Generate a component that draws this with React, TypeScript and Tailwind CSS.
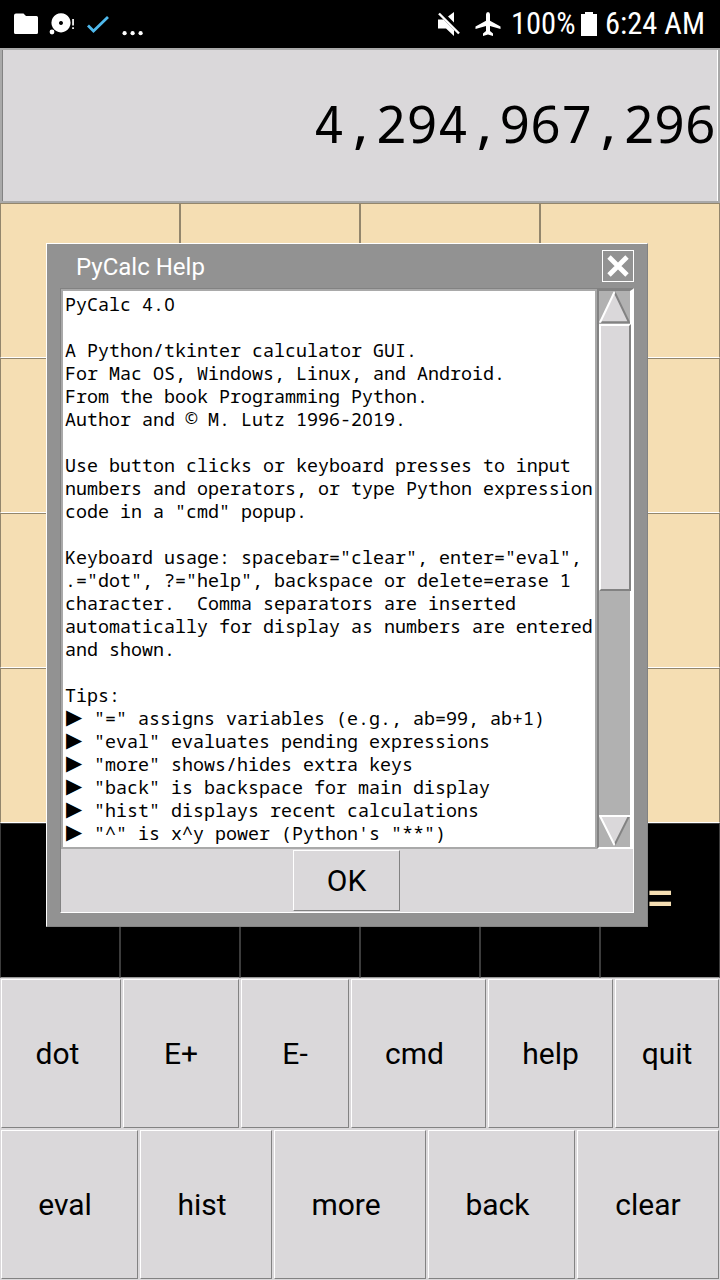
import React from "react";

const helpLines = [
  "PyCalc 4.0",
  "",
  "A Python/tkinter calculator GUI.",
  "For Mac OS, Windows, Linux, and Android.",
  "From the book Programming Python.",
  "Author and © M. Lutz 1996-2019.",
  "",
  "Use button clicks or keyboard presses to input",
  "numbers and operators, or type Python expression",
  'code in a "cmd" popup.',
  "",
  'Keyboard usage: spacebar="clear", enter="eval",',
  '.="dot", ?="help", backspace or delete=erase 1',
  "character.  Comma separators are inserted",
  "automatically for display as numbers are entered",
  "and shown.",
  "",
  "Tips:",
];

const tips = [
  '"=" assigns variables (e.g., ab=99, ab+1)',
  '"eval" evaluates pending expressions',
  '"more" shows/hides extra keys',
  '"back" is backspace for main display',
  '"hist" displays recent calculations',
  '"^" is x^y power (Python\'s "**")',
];

const actionsTop = [
  { label: "dot", size: "w-[120px] pr-[7px]" },
  { label: "E+", size: "w-[116px]" },
  { label: "E-", size: "w-[108px]" },
  { label: "cmd", size: "w-[135px] pr-2" },
  { label: "help", size: "w-[125px]" },
  { label: "quit", size: "w-[104px]" },
];

const actionsBottom = [
  { label: "eval", size: "w-[137px] pr-[9px]" },
  { label: "hist", size: "w-[132px] pr-2" },
  { label: "more", size: "w-[152px] pr-2" },
  { label: "back", size: "w-[147px] pr-2" },
  { label: "clear", size: "w-[142px]" },
];

function StatusBar() {
  return (
    <header className="flex h-12 items-center bg-black text-white">
      <svg className="h-12 w-[112px] shrink-0" viewBox="0 0 112 48" fill="#fff">
        <path d="M14 15.500q0-2 2-2h7.500l2.500 2.500h10.500q1.500 0 1.500 1.500v15q0 1.500-1.500 1.500h-21q-1.500 0-1.500-1.500z" />
        <path
          fillRule="evenodd"
          d="M61 13.200a9.600 9.600 0 1 0 .01 0zM61 21a2 2 0 1 1-.01 0z"
        />
        <circle cx="52" cy="32" r="2.400" />
        <path d="M72.200 19h1.700v6.500h-1.700zM72.200 27.200h1.700v1.800h-1.700z" />
        <path d="M88 25.500l5.500 5.500L108 17" fill="none" stroke="#4fb9ec" strokeWidth="2.800" />
      </svg>
      <svg className="ml-2 h-12 w-6 shrink-0" viewBox="120 0 24 48" fill="#fff">
        <circle cx="124.600" cy="33.200" r="2.100" />
        <circle cx="132.600" cy="33.200" r="2.100" />
        <circle cx="140.600" cy="33.200" r="2.100" />
      </svg>
      <div className="ml-auto flex h-12 items-center pt-px font-['Roboto_Condensed','Roboto',sans-serif] text-[30.500px] leading-none">
        <svg className="-mt-px h-12 w-[70px]" viewBox="434 0 70 48" fill="#fff">
          <path d="M438 19.500h5.500l10.500 10.500v6l-8-7.500h-8z" />
          <path d="M448 16.500l6-4.500v10.500z" />
          <path d="M439 13.500L459 33.500" stroke="#fff" strokeWidth="2.400" />
          <path d="M488 12q2 0 2 2.500v6.200l10.500 5.700v2.600L490 26v5l3 2.500V36l-5-1.500-5 1.500v-2.500l3-2.500v-5l-10.500 3v-2.600L486 20.700v-6.200q0-2.500 2-2.500z" />
        </svg>
        <span className="ml-[7px] w-[64px] whitespace-nowrap">100%</span>
        <svg className="-mt-px ml-[5px] h-12 w-[18px]" viewBox="580 0 18 48" fill="#fff">
          <path d="M585 12h8v2h4v22h-16V14h4z" />
        </svg>
        <span className="ml-[7px] w-[115px] whitespace-nowrap">6:24 AM</span>
      </div>
    </header>
  );
}

function ActionRow({ items }: { items: { label: string; size: string }[] }) {
  return (
    <div className="flex gap-[2px] px-px">
      {items.map((item) => (
        <button
          key={item.label}
          className={`flex h-[149px] shrink-0 items-center justify-center border border-t-white border-l-white border-r-[#828282] border-b-[#828282] ${item.size}`}
        >
          {item.label}
        </button>
      ))}
    </div>
  );
}

function Scrollbar() {
  return (
    <div className="flex w-[36px] flex-col border-t-2 border-r-[3px] border-b-2 border-l-2 border-t-[#828282] border-r-white border-b-white border-l-[#828282] bg-[#b1b1b1]">
      <svg className="h-[33px] w-[31px] shrink-0" viewBox="0 0 31 33">
        <path d="M15.500 0L31 32H0z" fill="#dad8da" />
        <path d="M15.500 1L30 31.200H1" fill="none" stroke="#828282" strokeWidth="2" />
        <path d="M1 31.500L15.500 1" fill="none" stroke="#fff" strokeWidth="2" />
      </svg>
      <div className="h-[267px] w-8 shrink-0 border-2 border-t-white border-r-[#828282] border-b-[#828282] border-l-white bg-[#dad8da]" />
      <svg className="mt-auto h-8 w-[31px] shrink-0" viewBox="0 0 31 32">
        <path d="M0 0H31L15.500 31z" fill="#dad8da" />
        <path d="M30 1L15.500 30" fill="none" stroke="#828282" strokeWidth="2" />
        <path d="M31 1H1L15.500 30" fill="none" stroke="#fff" strokeWidth="2" />
      </svg>
    </div>
  );
}

/* Zeros and the copyright sign are set in the proportional face, one cell wide each. */
function MonoLine({ text }: { text: string }) {
  return (
    <>
      {text.split(/([0©])/).map((part, i) => {
        if (part === "0") {
          return (
            <span key={i} className="inline-block h-[23px] w-[11px] text-center align-top font-['Noto_Sans',sans-serif]">
              0
            </span>
          );
        }
        if (part === "©") {
          return (
            <span key={i} className="inline-flex h-[23px] w-[11px] justify-center align-top font-['Noto_Sans',sans-serif] text-[16px]">
              ©
            </span>
          );
        }
        return <React.Fragment key={i}>{part}</React.Fragment>;
      })}
    </>
  );
}

function HelpDialog() {
  return (
    <section className="absolute top-[243px] left-[46px] flex h-[684px] w-[602px] flex-col border border-t-white border-r-[#828282] border-b-[#828282] border-l-white bg-[#929292] px-[13px] pb-[13px]">
      <div className="flex h-[44px] shrink-0 items-center justify-between pl-4">
        <h1 className="pt-[2px] font-['Roboto',sans-serif] text-2xl leading-none text-white">PyCalc Help</h1>
        <button className="flex size-8 items-center justify-center border border-white">
          <svg className="size-[22px]" viewBox="0 0 22 22" fill="none" stroke="#fff" strokeWidth="4.800">
            <path d="M2 2L20 20M20 2L2 20" />
          </svg>
        </button>
      </div>
      <div className="flex min-h-0 flex-1 flex-col border border-t-[#828282] border-r-white border-b-white border-l-[#828282] bg-[#dad8da]">
        <div className="flex h-[560px] shrink-0">
          <div className="w-[536px] shrink-0 overflow-hidden border-2 border-[#a9a9a9] bg-white pt-px pl-[2px] font-['Noto_Sans_Mono','DejaVu_Sans_Mono',monospace] text-[18.333px] leading-[23px] text-black">
            {helpLines.map((line, i) => (
              <div key={i} className="h-[23px] whitespace-pre">
                <MonoLine text={line} />
              </div>
            ))}
            {tips.map((tip) => (
              <div key={tip} className="flex h-[23px] whitespace-pre">
                <span className="w-[29px] pl-px font-['DejaVu_Sans'] text-[21px]">▶</span>
                <span>{tip}</span>
              </div>
            ))}
          </div>
          <Scrollbar />
        </div>
        <div className="flex flex-1 justify-center pt-px pr-[2px]">
          <button className="h-[61px] w-[107px] border border-t-white border-r-[#828282] border-b-[#828282] border-l-white pl-px font-['Roboto',sans-serif] text-[30px] text-black">
            OK
          </button>
        </div>
      </div>
    </section>
  );
}

export default function App() {
  return (
    <div className="relative flex h-[1280px] w-[720px] flex-col overflow-hidden bg-[#dad8da] font-['Roboto',sans-serif] text-black">
      <StatusBar />
      <div className="h-[155px] shrink-0 border-2 border-[#a9a9a9]">
        <div className="flex h-full items-center justify-end border-x border-l-[#828282] border-r-white pr-px pb-[3px] font-['Noto_Sans_Mono','DejaVu_Sans_Mono',monospace] text-[51.600px] leading-none">
          4,294,967,296
        </div>
      </div>
      <div className="grid h-[620px] shrink-0 grid-cols-4 grid-rows-4">
        {Array.from({ length: 16 }, (_, i) => (
          <div
            key={i}
            className="border border-t-[#93866c] border-r-[#93866c] border-b-white border-l-[#93866c] bg-[#f5deb3]"
          />
        ))}
      </div>
      <div className="grid h-[155px] shrink-0 grid-cols-6">
        {["", "", "", "", "", "="].map((key, i) => (
          <div
            key={i}
            className="flex items-center justify-center border border-t-[#3c3c3c] border-r-[#3c3c3c] border-b-[#999999] border-l-[#3c3c3c] bg-black pb-[3px] text-[53px] leading-none text-[#f5deb3]"
          >
            {key}
          </div>
        ))}
      </div>
      <div className="flex flex-col gap-[2px] pt-px text-[30px]">
        <ActionRow items={actionsTop} />
        <ActionRow items={actionsBottom} />
      </div>
      <HelpDialog />
    </div>
  );
}
